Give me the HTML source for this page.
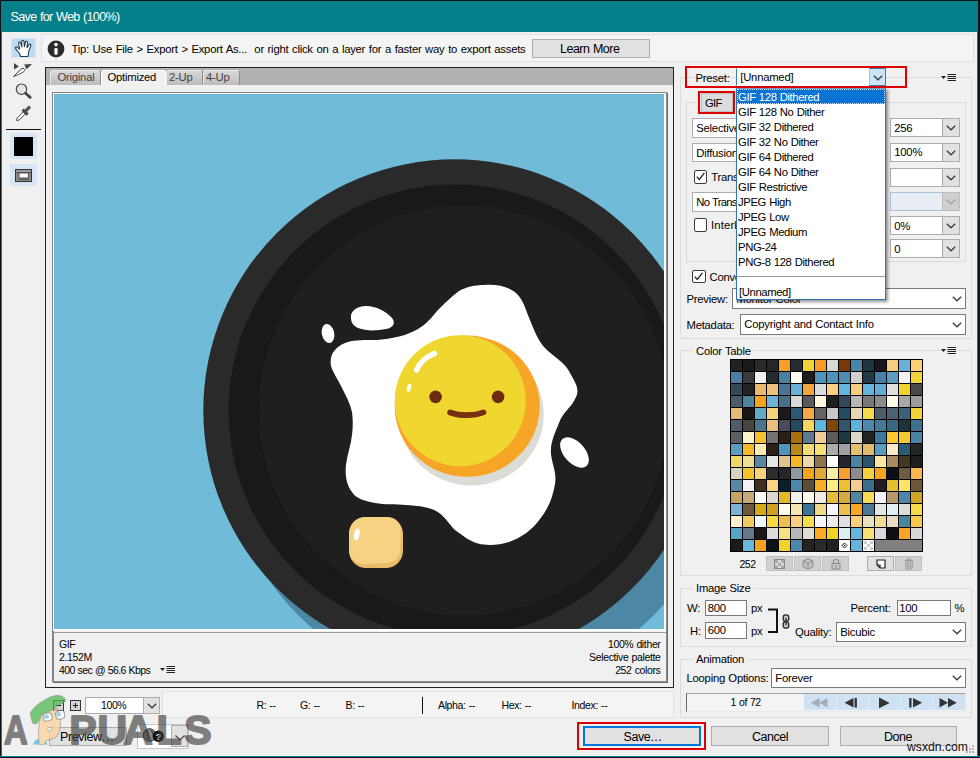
<!DOCTYPE html>
<html lang="en"><head><meta charset="utf-8"><title>Save for Web (100%)</title>
<style>
*{box-sizing:border-box;margin:0;padding:0}
html,body{width:980px;height:758px;overflow:hidden;background:#f0f0f0}
body{font-family:"Liberation Sans",sans-serif;font-size:11.3px;letter-spacing:-0.25px;word-spacing:0.5px;color:#000;position:relative}
#win{position:absolute;left:0;top:0;width:980px;height:758px;background:#f0f0f0;overflow:hidden}
.a{position:absolute}
.t{position:absolute;white-space:nowrap;line-height:14px;height:14px}
.dd{position:absolute;background:#fff;border:1px solid #adadad}
.dd .b{position:absolute;right:-1px;top:-1px;bottom:-1px;width:18px;background:#e1e1e1;border:1px solid #adadad}
.dd .b svg{position:absolute;left:3.3px;top:50%;margin-top:-2.3px}
.dd .v{position:absolute;left:3.3px;top:50%;margin-top:-7px;line-height:14px;white-space:nowrap}
.inp{position:absolute;background:#fff;border:1px solid #7a7a7a}
.inp .v{position:absolute;left:1.7px;top:50%;margin-top:-7px;line-height:14px}
.btn{position:absolute;background:#e1e1e1;border:1px solid #adadad;text-align:center}
.grp{position:absolute;border:1px solid #dcdcdc}
.grp>.lg{position:absolute;top:-7.3px;background:#f0f0f0;padding:0 3px;line-height:14px;white-space:nowrap}
.cb{position:absolute;width:13.5px;height:13.5px;background:#fff;border:1px solid #3c3c3c;border-radius:2px}
.li{position:absolute;left:0;right:0;height:15px;line-height:15px;padding-left:1px;padding-top:0.5px;white-space:nowrap;letter-spacing:-0.4px}
</style></head>
<body>
<div id="win">
<div class="a" style="left:0;top:0;width:980px;height:32px;background:#05808a"></div>
<span class="t" style="left:10.5px;top:10px;font-size:12.6px;color:#fff;letter-spacing:-0.66px;">Save for Web (100%)</span>
<div class="a" style="left:11px;top:38px;width:25px;height:20px;background:#bcdcf4;border:1px solid #d2e8f8"></div>
<svg class="a" style="left:14px;top:39px" width="20" height="19" viewBox="0 0 20 19">
<path d="M6.5 17.5 L5.5 14.5 L1.6 9.6 C0.9 8.6 2 7.4 3.2 8.2 L5.6 10.2 L4.6 4.2 C4.4 2.8 6.3 2.5 6.7 3.8 L7.9 8 L7.7 2.4 C7.7 0.9 9.9 0.9 10 2.4 L10.4 7.8 L11.4 3 C11.7 1.7 13.6 2 13.5 3.4 L13 8.6 L14.9 5.6 C15.6 4.5 17.2 5.3 16.8 6.6 L14.6 13 L14 17.5 Z" fill="#fff" stroke="#24384a" stroke-width="1.05" stroke-linejoin="round"/>
</svg>
<svg class="a" style="left:12px;top:61px" width="24" height="18" viewBox="0 0 24 18">
<path d="M2 2 L2 8.6 L6.8 5.6 Z" fill="#444"/>
<path d="M12.2 3.4 L20 3 L14.6 8.2 Z" fill="#444"/>
<path d="M1.5 15.5 L9 8.2 C10 7 12.4 7 12.8 8.6 C12.8 11 9 12.6 1.5 15.5 Z" fill="#f8f8f8" stroke="#444" stroke-width="1"/>
</svg>
<svg class="a" style="left:12px;top:81px" width="24" height="20" viewBox="0 0 24 20">
<circle cx="9.5" cy="8.2" r="5.2" fill="#e4e4e4" stroke="#444" stroke-width="1.2"/>
<path d="M13.6 12.2 L18.2 16.4" stroke="#444" stroke-width="2.8" stroke-linecap="round"/>
</svg>
<svg class="a" style="left:12px;top:103px" width="24" height="20" viewBox="0 0 24 20">
<path d="M4.6 17.4 L5 15.2 L12 8.2 L14 10.2 L7 17.2 Z" fill="#fff" stroke="#444" stroke-width="1"/>
<path d="M10.6 6.6 L15.6 11.6" stroke="#444" stroke-width="3"/>
<path d="M14 7.6 L17 4.6" stroke="#555" stroke-width="3.4" stroke-linecap="round"/>
</svg>
<div class="a" style="left:6px;top:129px;width:35px;height:1.4px;background:#111"></div>
<div class="a" style="left:10px;top:133px;width:27px;height:26px;background:#d6e6f4"></div>
<div class="a" style="left:14px;top:137px;width:19px;height:19px;background:#000"></div>
<div class="a" style="left:10px;top:164px;width:27px;height:22px;background:#d6e6f4"></div>
<svg class="a" style="left:15px;top:169px" width="17" height="13" viewBox="0 0 17 13">
<rect x="0.5" y="0.5" width="16" height="12" fill="#8a8a8a" stroke="#333" stroke-width="1"/>
<rect x="1" y="1" width="15" height="2.4" fill="#9c9c9c"/>
<rect x="1" y="3.4" width="15" height="0.8" fill="#444"/>
<rect x="4" y="4" width="9.5" height="5" fill="#fff" stroke="#333" stroke-width="0.8"/>
<rect x="4" y="10" width="9.5" height="0.8" fill="#444"/>
</svg>
<div class="a" style="left:41px;top:34px;width:933px;height:28px;background:#f4f4f4;border:1px solid #e2e2e2"></div>
<svg class="a" style="left:46.5px;top:39.5px" width="18" height="18" viewBox="0 0 18 18">
<circle cx="9" cy="9" r="8.400" fill="#2b2b2b"/>
<circle cx="9" cy="4.600" r="1.800" fill="#fff"/>
<rect x="7.400" y="8.200" width="3.200" height="6.400" fill="#fff"/>
</svg>
<span class="t" style="left:71.5px;top:41.5px;word-spacing:0.8px;">Tip: Use File &gt; Export &gt; Export As...&nbsp; or right click on a layer for a faster way to export assets</span>
<div class="btn" style="left:532px;top:38.5px;width:118px;height:19.5px;background:#e1e1e1;border-color:#adadad"></div>
<span class="t" style="left:560px;top:41.5px;font-size:12.5px;letter-spacing:-0.5px;">Learn More</span>
<div class="a" style="left:45px;top:67px;width:629px;height:621px;border:1px solid #222;background:#f0f0f0"></div>
<div class="a" style="left:46px;top:68px;width:627px;height:17px;background:#b1b1b1"></div>
<div class="a" style="left:50px;top:69.5px;width:51px;height:15.5px;background:linear-gradient(#d8d8d8,#bcbcbc);border:1px solid #e8e8e8;border-bottom:none;border-right-color:#8c8c8c;border-radius:3px 3px 0 0"></div>
<div class="a" style="left:101px;top:69.5px;width:65px;height:16.5px;background:#f0f0f0;border:1px solid #fff;border-bottom:none;border-radius:3px 3px 0 0"></div>
<div class="a" style="left:166px;top:69.5px;width:37px;height:15.5px;background:linear-gradient(#d8d8d8,#bcbcbc);border:1px solid #e8e8e8;border-bottom:none;border-right-color:#8c8c8c;border-radius:3px 3px 0 0"></div>
<div class="a" style="left:203px;top:69.5px;width:37px;height:15.5px;background:linear-gradient(#d8d8d8,#bcbcbc);border:1px solid #e8e8e8;border-bottom:none;border-right-color:#8c8c8c;border-radius:3px 3px 0 0"></div>
<span class="t" style="left:57.5px;top:69.7px;color:#444;">Original</span>
<span class="t" style="left:107.5px;top:69.7px;color:#000;">Optimized</span>
<span class="t" style="left:169px;top:69.7px;color:#444;">2-Up</span>
<span class="t" style="left:206px;top:69.7px;color:#444;">4-Up</span>
<div class="a" style="left:51.5px;top:91.5px;width:615.5px;height:590.5px;border:1px solid #8c8c8c;border-left:2px solid #848484;border-top:2px solid #848484;background:#f0f0f0;box-shadow:1px 1px 0 #6a6a6a"></div>
<div class="a" style="left:53px;top:93px;width:613px;height:538px;background:#fff"></div>
<div class="a" style="left:53px;top:631.7px;width:613px;height:1px;background:#9a9a9a"></div>
<svg class="a" style="left:54px;top:94px" width="610" height="535" viewBox="54 94 610 535">
<rect x="54" y="94" width="610" height="535" fill="#70bbd7"/>
<circle cx="476" cy="437.6" r="251.3" fill="#4c87a6"/>
<circle cx="454.6" cy="410.6" r="251.3" fill="#2a2a2a"/>
<circle cx="454.6" cy="410.6" r="226" fill="#181a1a"/>
<circle cx="464" cy="410.4" r="205" fill="#1f1f1f"/>
<!-- egg white -->
<path d="M484 285 C498 284 510 287 517 294 C524 301 526 311 530 320 C534 330 538 340 544 347 C552 356 565 362 570 373 C575 382 580 389 576 397 C572 407 562 413 559 423 C555 433 550 443 551 454 C552 464 557 473 555 484 C553 497 548 509 540 519 C532 530 521 538 509 542 C499 545 488 546 478 543.5 C469 541 462 535 455 530 C449 524 444 515 436 511 C427 506 416 506 406 505 C396 504 385 505 375 503 C366 501 356 499 352 492 C346 484 345 474 346 465 C347 455 351 445 352 435 C353 427 353 419 352 412 C350 403 346 396 342.5 389 C339 381 333 373 331 366 C330 360 331 354 335 350 C339 345 346 342 352 341 C363 339 375 341 386 339 C399 337 411 334 421 327 C429 322 434 314 440 308 C446 302 452 296 459 291 C466 287 475 285 484 285 Z" fill="#fff"/>
<path d="M351 318 C350 311 357 306 366 306 C376 306 386 311 392 318 C396 323 393 328 386 329 C376 331 366 331 358 328 C354 326 351 323 351 318 Z" fill="#fff"/>
<ellipse cx="328" cy="333.5" rx="6.2" ry="9.6" fill="#fff" transform="rotate(-12 328 333.5)"/>
<ellipse cx="574.5" cy="452.5" rx="18" ry="10.5" fill="#fff" transform="rotate(48 574.5 452.5)"/>
<!-- yolk -->
<ellipse cx="471.2" cy="414.500" rx="72.500" ry="71" fill="#dadcd5"/>
<ellipse cx="467.2" cy="406.200" rx="72.500" ry="70.600" fill="#f6a526"/>
<circle cx="460.3" cy="400.8" r="65.5" fill="#efd730"/>
<path d="M416.5 370 C420 362.500 426.500 356.500 434.500 353.500" fill="none" stroke="#fff" stroke-width="5.4" stroke-linecap="round"/>
<ellipse cx="409" cy="387.700" rx="2" ry="4.200" fill="#fff" transform="rotate(15 409 387.700)"/>
<circle cx="435.6" cy="396.900" r="6.300" fill="#6e2c10"/>
<circle cx="498.1" cy="396.900" r="6.300" fill="#6e2c10"/>
<path d="M450.100 412.400 C460 416 474 416 483.400 412.400" fill="none" stroke="#7a3010" stroke-width="5.800" stroke-linecap="round"/>
<!-- butter -->
<rect x="349" y="517" width="54" height="51" rx="17" ry="17" fill="#e9bc68"/>
<path d="M349 534 C349 524 356 517 366 517 L386 517 C396 517 401 523 401 532 L400 549 C400 558 394 563 385 563 L366 564 C356 564 349 558 349 549 Z" fill="#f8d283"/>
<ellipse cx="356.8" cy="534.5" rx="2.8" ry="6" fill="#fff" transform="rotate(10 356.8 534.5)"/>
</svg>
<span class="t" style="left:59px;top:637px;font-size:10.5px;letter-spacing:-0.36px;">GIF</span>
<span class="t" style="left:59px;top:650px;font-size:10.5px;letter-spacing:-0.36px;">2.152M</span>
<span class="t" style="left:59px;top:663px;font-size:10.5px;letter-spacing:-0.6px;">400 sec @ 56.6 Kbps</span>
<svg class="a" style="left:160px;top:665px" width="16" height="10" viewBox="0 0 16 10"><path d="M0 3 L5 3 L2.5 6 Z" fill="#222"/><path d="M6.5 1.5 H15 M6.5 3.5 H15 M6.5 5.5 H15 M6.5 7.5 H15" stroke="#222" stroke-width="1"/></svg>
<span class="t" style="right:319.5px;top:637px;letter-spacing:-0.36px;font-size:10.5px;">100% dither</span>
<span class="t" style="right:319.5px;top:650px;letter-spacing:-0.36px;font-size:10.5px;">Selective palette</span>
<span class="t" style="right:319.5px;top:663px;letter-spacing:-0.36px;font-size:10.5px;">252 colors</span>
<div class="grp" style="left:680px;top:77px;width:292px;height:262px"></div>
<div class="grp" style="left:686px;top:102px;width:280px;height:160px"></div>
<span class="t" style="left:695.5px;top:71px;">Preset:</span>
<svg class="a" style="left:941px;top:73px" width="16" height="10" viewBox="0 0 16 10"><path d="M0 3 L5 3 L2.5 6 Z" fill="#222"/><path d="M6.5 1.5 H15 M6.5 3.5 H15 M6.5 5.5 H15 M6.5 7.5 H15" stroke="#222" stroke-width="1"/></svg>
<div class="dd" style="left:736px;top:68px;width:150px;height:18px;border-color:#3c7cb8;border-top-color:#fff;border-bottom-color:#fff;padding-top:1px;"><span class="v">[Unnamed]</span><span class="b" style="width:17px;background:#cce4f7;border-color:#3c7cb8;border-left-color:#9cc4e4;"><svg width="10" height="6" viewBox="0 0 10 6"><path d="M0.8 0.7 L5 4.8 L9.2 0.7" fill="none" stroke="#3a3a3a" stroke-width="1.25"/></svg></span></div>
<div class="a" style="left:685px;top:66px;width:222px;height:22px;border:2px solid #dc0000"></div>
<div class="btn" style="left:701px;top:93px;width:32px;height:19px;background:#dcdcdc;border-color:#bdbdbd"></div>
<span class="t" style="left:705px;top:96px;letter-spacing:-0.7px;">GIF</span>
<div class="a" style="left:698px;top:91px;width:37px;height:23px;border:2px solid #dc0000"></div>
<div class="dd" style="left:692px;top:118px;width:130px;height:19.5px;"><span class="v">Selective</span><span class="b" style="width:18px;"><svg width="10" height="6" viewBox="0 0 10 6"><path d="M0.8 0.7 L5 4.8 L9.2 0.7" fill="none" stroke="#3a3a3a" stroke-width="1.25"/></svg></span></div>
<div class="dd" style="left:692px;top:142.8px;width:130px;height:19.7px;"><span class="v">Diffusion</span><span class="b" style="width:18px;"><svg width="10" height="6" viewBox="0 0 10 6"><path d="M0.8 0.7 L5 4.8 L9.2 0.7" fill="none" stroke="#3a3a3a" stroke-width="1.25"/></svg></span></div>
<div class="dd" style="left:692px;top:192px;width:150px;height:19.7px;"><span class="v"><span style="letter-spacing:-0.75px">No Transparency Dither</span></span><span class="b" style="width:18px;"><svg width="10" height="6" viewBox="0 0 10 6"><path d="M0.8 0.7 L5 4.8 L9.2 0.7" fill="none" stroke="#3a3a3a" stroke-width="1.25"/></svg></span></div>
<div class="cb" style="left:693.5px;top:170.3px"><svg class="a" style="left:0;top:0" width="11" height="11" viewBox="0 0 11 11"><path d="M1.8 5.6 L4.3 8.4 L9.4 1.8" fill="none" stroke="#222" stroke-width="1.3"/></svg></div>
<span class="t" style="left:711.3px;top:170.3px;">Transparency</span>
<div class="cb" style="left:693.5px;top:218.3px"></div>
<span class="t" style="left:711px;top:218.3px;letter-spacing:0.15px;">Interlaced</span>
<div class="cb" style="left:692px;top:269.5px"><svg class="a" style="left:0;top:0" width="11" height="11" viewBox="0 0 11 11"><path d="M1.8 5.6 L4.3 8.4 L9.4 1.8" fill="none" stroke="#222" stroke-width="1.3"/></svg></div>
<span class="t" style="left:709.5px;top:269.5px;">Convert to sRGB</span>
<div class="dd" style="left:890px;top:118px;width:70px;height:19.3px;"><span class="v">256</span><span class="b" style="width:18px;"><svg width="10" height="6" viewBox="0 0 10 6"><path d="M0.8 0.7 L5 4.8 L9.2 0.7" fill="none" stroke="#3a3a3a" stroke-width="1.25"/></svg></span></div>
<div class="dd" style="left:890px;top:142.8px;width:70px;height:19.4px;"><span class="v">100%</span><span class="b" style="width:18px;"><svg width="10" height="6" viewBox="0 0 10 6"><path d="M0.8 0.7 L5 4.8 L9.2 0.7" fill="none" stroke="#3a3a3a" stroke-width="1.25"/></svg></span></div>
<div class="dd" style="left:890px;top:167.5px;width:70px;height:19.5px;"><span class="v"></span><span class="b" style="width:18px;"><svg width="10" height="6" viewBox="0 0 10 6"><path d="M0.8 0.7 L5 4.8 L9.2 0.7" fill="none" stroke="#3a3a3a" stroke-width="1.25"/></svg></span></div>
<div class="dd" style="left:890px;top:192px;width:70px;height:19px;background:#e9eef4;border-color:#a9c2dc;"><span class="v"></span><span class="b" style="width:18px;background:#cfcfcf;border-color:#bcbcbc;"><svg width="10" height="6" viewBox="0 0 10 6"><path d="M0.5 0.5 L5 5 L9.5 0.5" fill="none" stroke="#a0a0a0" stroke-width="1.1"/></svg></span></div>
<div class="dd" style="left:890px;top:216px;width:70px;height:19px;"><span class="v">0%</span><span class="b" style="width:18px;"><svg width="10" height="6" viewBox="0 0 10 6"><path d="M0.8 0.7 L5 4.8 L9.2 0.7" fill="none" stroke="#3a3a3a" stroke-width="1.25"/></svg></span></div>
<div class="dd" style="left:890px;top:239px;width:70px;height:19px;"><span class="v">0</span><span class="b" style="width:18px;"><svg width="10" height="6" viewBox="0 0 10 6"><path d="M0.8 0.7 L5 4.8 L9.2 0.7" fill="none" stroke="#3a3a3a" stroke-width="1.25"/></svg></span></div>
<span class="t" style="left:686.5px;top:292px;">Preview:</span>
<div class="dd" style="left:732px;top:288px;width:234px;height:21px;border-color:#7a7a7a;"><span class="v">Monitor Color</span><span class="b" style="width:18px;background:transparent;border-color:transparent;"><svg width="10" height="6" viewBox="0 0 10 6"><path d="M0.8 0.7 L5 4.8 L9.2 0.7" fill="none" stroke="#3a3a3a" stroke-width="1.25"/></svg></span></div>
<span class="t" style="left:686.5px;top:317.5px;">Metadata:</span>
<div class="dd" style="left:740px;top:314px;width:226px;height:20.5px;border-color:#7a7a7a;"><span class="v">Copyright and Contact Info</span><span class="b" style="width:18px;background:transparent;border-color:transparent;"><svg width="10" height="6" viewBox="0 0 10 6"><path d="M0.8 0.7 L5 4.8 L9.2 0.7" fill="none" stroke="#3a3a3a" stroke-width="1.25"/></svg></span></div>
<div class="a" style="left:736px;top:88px;width:150px;height:212px;background:#fff;border:1px solid #2f74b5;border-top-color:#6aa0d0;box-shadow:2px 2px 3px rgba(0,0,0,.42)"><div class="li" style="top:0px;background:#0a74d4;color:#fff;outline:1px dotted #cfe4f8;outline-offset:-1px">GIF 128 Dithered</div><div class="li" style="top:15px">GIF 128 No Dither</div><div class="li" style="top:30px">GIF 32 Dithered</div><div class="li" style="top:45px">GIF 32 No Dither</div><div class="li" style="top:60px">GIF 64 Dithered</div><div class="li" style="top:75px">GIF 64 No Dither</div><div class="li" style="top:90px">GIF Restrictive</div><div class="li" style="top:105px">JPEG High</div><div class="li" style="top:120px">JPEG Low</div><div class="li" style="top:135px">JPEG Medium</div><div class="li" style="top:150px">PNG-24</div><div class="li" style="top:165px">PNG-8 128 Dithered</div><div class="a" style="left:0;right:0;top:186.5px;height:1px;background:#9a9a9a"></div><div class="li" style="top:195px;padding-left:2px">[Unnamed]</div></div>
<div class="grp" style="left:680px;top:350px;width:292px;height:226px"><span class="lg" style="left:12px">Color Table</span></div>
<svg class="a" style="left:941px;top:346px" width="16" height="10" viewBox="0 0 16 10"><path d="M0 3 L5 3 L2.5 6 Z" fill="#222"/><path d="M6.5 1.5 H15 M6.5 3.5 H15 M6.5 5.5 H15 M6.5 7.5 H15" stroke="#222" stroke-width="1"/></svg>
<svg class="a" style="left:730px;top:359px" width="193" height="193" viewBox="0 0 193 193" shape-rendering="crispEdges"><rect width="193" height="193" fill="#000"/><rect x="1" y="1" width="11" height="11" fill="#222222"/><rect x="13" y="1" width="11" height="11" fill="#1a1a1a"/><rect x="25" y="1" width="11" height="11" fill="#2a2a2a"/><rect x="37" y="1" width="11" height="11" fill="#262626"/><rect x="49" y="1" width="11" height="11" fill="#f6a02c"/><rect x="61" y="1" width="11" height="11" fill="#262c32"/><rect x="73" y="1" width="11" height="11" fill="#f2d43a"/><rect x="85" y="1" width="11" height="11" fill="#f89c28"/><rect x="97" y="1" width="11" height="11" fill="#d8d8d4"/><rect x="109" y="1" width="11" height="11" fill="#78380c"/><rect x="121" y="1" width="11" height="11" fill="#4a86a8"/><rect x="133" y="1" width="11" height="11" fill="#1e3640"/><rect x="145" y="1" width="11" height="11" fill="#18161c"/><rect x="157" y="1" width="11" height="11" fill="#f6cc80"/><rect x="169" y="1" width="11" height="11" fill="#6ab0d4"/><rect x="181" y="1" width="11" height="11" fill="#fcd078"/><rect x="1" y="13" width="11" height="11" fill="#4a7ea6"/><rect x="13" y="13" width="11" height="11" fill="#3a3a3a"/><rect x="25" y="13" width="11" height="11" fill="#f0f0f0"/><rect x="37" y="13" width="11" height="11" fill="#222c2c"/><rect x="49" y="13" width="11" height="11" fill="#4a80a0"/><rect x="61" y="13" width="11" height="11" fill="#fffcf0"/><rect x="73" y="13" width="11" height="11" fill="#1c1c1c"/><rect x="85" y="13" width="11" height="11" fill="#4e94b8"/><rect x="97" y="13" width="11" height="11" fill="#4e94b8"/><rect x="109" y="13" width="11" height="11" fill="#4e8cb0"/><rect x="121" y="13" width="11" height="11" fill="#d0d0d0"/><rect x="133" y="13" width="11" height="11" fill="#223a48"/><rect x="145" y="13" width="11" height="11" fill="#4680a8"/><rect x="157" y="13" width="11" height="11" fill="#5a9cc4"/><rect x="169" y="13" width="11" height="11" fill="#f4f0f4"/><rect x="181" y="13" width="11" height="11" fill="#f2d438"/><rect x="1" y="25" width="11" height="11" fill="#364856"/><rect x="13" y="25" width="11" height="11" fill="#222222"/><rect x="25" y="25" width="11" height="11" fill="#ecb86c"/><rect x="37" y="25" width="11" height="11" fill="#ecc27c"/><rect x="49" y="25" width="11" height="11" fill="#4c7496"/><rect x="61" y="25" width="11" height="11" fill="#68b0d4"/><rect x="73" y="25" width="11" height="11" fill="#f4a43c"/><rect x="85" y="25" width="11" height="11" fill="#dcdcdc"/><rect x="97" y="25" width="11" height="11" fill="#fcd080"/><rect x="109" y="25" width="11" height="11" fill="#64b4dc"/><rect x="121" y="25" width="11" height="11" fill="#f8cc80"/><rect x="133" y="25" width="11" height="11" fill="#64b4dc"/><rect x="145" y="25" width="11" height="11" fill="#62acd4"/><rect x="157" y="25" width="11" height="11" fill="#e0e0e0"/><rect x="169" y="25" width="11" height="11" fill="#f0d42c"/><rect x="181" y="25" width="11" height="11" fill="#484848"/><rect x="1" y="37" width="11" height="11" fill="#485c70"/><rect x="13" y="37" width="11" height="11" fill="#4e84a0"/><rect x="25" y="37" width="11" height="11" fill="#f4a420"/><rect x="37" y="37" width="11" height="11" fill="#6cb4d8"/><rect x="49" y="37" width="11" height="11" fill="#4a7088"/><rect x="61" y="37" width="11" height="11" fill="#d8d8d8"/><rect x="73" y="37" width="11" height="11" fill="#5a5a5a"/><rect x="85" y="37" width="11" height="11" fill="#fff8e0"/><rect x="97" y="37" width="11" height="11" fill="#1e1e1e"/><rect x="109" y="37" width="11" height="11" fill="#34485c"/><rect x="121" y="37" width="11" height="11" fill="#b8b8b8"/><rect x="133" y="37" width="11" height="11" fill="#787878"/><rect x="145" y="37" width="11" height="11" fill="#8c8c8c"/><rect x="157" y="37" width="11" height="11" fill="#fffce8"/><rect x="169" y="37" width="11" height="11" fill="#a8a8a8"/><rect x="181" y="37" width="11" height="11" fill="#9c9c9c"/><rect x="1" y="49" width="11" height="11" fill="#e4bc78"/><rect x="13" y="49" width="11" height="11" fill="#181414"/><rect x="25" y="49" width="11" height="11" fill="#62a8c8"/><rect x="37" y="49" width="11" height="11" fill="#f6d27c"/><rect x="49" y="49" width="11" height="11" fill="#1a181c"/><rect x="61" y="49" width="11" height="11" fill="#2c5a74"/><rect x="73" y="49" width="11" height="11" fill="#f4a848"/><rect x="85" y="49" width="11" height="11" fill="#646464"/><rect x="97" y="49" width="11" height="11" fill="#c8c8c8"/><rect x="109" y="49" width="11" height="11" fill="#244c60"/><rect x="121" y="49" width="11" height="11" fill="#e4d8b4"/><rect x="133" y="49" width="11" height="11" fill="#f4dc50"/><rect x="145" y="49" width="11" height="11" fill="#505c68"/><rect x="157" y="49" width="11" height="11" fill="#486470"/><rect x="169" y="49" width="11" height="11" fill="#3c6078"/><rect x="181" y="49" width="11" height="11" fill="#f2d438"/><rect x="1" y="61" width="11" height="11" fill="#505c6c"/><rect x="13" y="61" width="11" height="11" fill="#46443c"/><rect x="25" y="61" width="11" height="11" fill="#4c748c"/><rect x="37" y="61" width="11" height="11" fill="#ecc07c"/><rect x="49" y="61" width="11" height="11" fill="#484c5c"/><rect x="61" y="61" width="11" height="11" fill="#244a60"/><rect x="73" y="61" width="11" height="11" fill="#f4d85c"/><rect x="85" y="61" width="11" height="11" fill="#5cb8dc"/><rect x="97" y="61" width="11" height="11" fill="#7c4808"/><rect x="109" y="61" width="11" height="11" fill="#34566c"/><rect x="121" y="61" width="11" height="11" fill="#5cb4dc"/><rect x="133" y="61" width="11" height="11" fill="#4e88a8"/><rect x="145" y="61" width="11" height="11" fill="#46789c"/><rect x="157" y="61" width="11" height="11" fill="#3a6880"/><rect x="169" y="61" width="11" height="11" fill="#1c343c"/><rect x="181" y="61" width="11" height="11" fill="#3e7090"/><rect x="1" y="73" width="11" height="11" fill="#5c6060"/><rect x="13" y="73" width="11" height="11" fill="#fcf4c8"/><rect x="25" y="73" width="11" height="11" fill="#f4c430"/><rect x="37" y="73" width="11" height="11" fill="#747474"/><rect x="49" y="73" width="11" height="11" fill="#2a2018"/><rect x="61" y="73" width="11" height="11" fill="#a8700c"/><rect x="73" y="73" width="11" height="11" fill="#5e7890"/><rect x="85" y="73" width="11" height="11" fill="#f0cc9c"/><rect x="97" y="73" width="11" height="11" fill="#5c5c5c"/><rect x="109" y="73" width="11" height="11" fill="#1e3840"/><rect x="121" y="73" width="11" height="11" fill="#dcd8c8"/><rect x="133" y="73" width="11" height="11" fill="#222222"/><rect x="145" y="73" width="11" height="11" fill="#3e789c"/><rect x="157" y="73" width="11" height="11" fill="#fcc830"/><rect x="169" y="73" width="11" height="11" fill="#f4c830"/><rect x="181" y="73" width="11" height="11" fill="#4a84a4"/><rect x="1" y="85" width="11" height="11" fill="#5c9cc0"/><rect x="13" y="85" width="11" height="11" fill="#f4b828"/><rect x="25" y="85" width="11" height="11" fill="#fcecb4"/><rect x="37" y="85" width="11" height="11" fill="#2a2018"/><rect x="49" y="85" width="11" height="11" fill="#4e94bc"/><rect x="61" y="85" width="11" height="11" fill="#b88818"/><rect x="73" y="85" width="11" height="11" fill="#f4dc74"/><rect x="85" y="85" width="11" height="11" fill="#f6e078"/><rect x="97" y="85" width="11" height="11" fill="#acacac"/><rect x="109" y="85" width="11" height="11" fill="#a0a0a0"/><rect x="121" y="85" width="11" height="11" fill="#e4c070"/><rect x="133" y="85" width="11" height="11" fill="#e0bc70"/><rect x="145" y="85" width="11" height="11" fill="#5c9cbc"/><rect x="157" y="85" width="11" height="11" fill="#f8ecc8"/><rect x="169" y="85" width="11" height="11" fill="#2c5c74"/><rect x="181" y="85" width="11" height="11" fill="#222828"/><rect x="1" y="97" width="11" height="11" fill="#f0d868"/><rect x="13" y="97" width="11" height="11" fill="#f0e094"/><rect x="25" y="97" width="11" height="11" fill="#5888a4"/><rect x="37" y="97" width="11" height="11" fill="#e4e8e0"/><rect x="49" y="97" width="11" height="11" fill="#e0c48c"/><rect x="61" y="97" width="11" height="11" fill="#f4b828"/><rect x="73" y="97" width="11" height="11" fill="#ecd8a8"/><rect x="85" y="97" width="11" height="11" fill="#8c744c"/><rect x="97" y="97" width="11" height="11" fill="#ffffff"/><rect x="109" y="97" width="11" height="11" fill="#24242c"/><rect x="121" y="97" width="11" height="11" fill="#4c84a4"/><rect x="133" y="97" width="11" height="11" fill="#2c5468"/><rect x="145" y="97" width="11" height="11" fill="#fce8a0"/><rect x="157" y="97" width="11" height="11" fill="#a88c60"/><rect x="169" y="97" width="11" height="11" fill="#443824"/><rect x="181" y="97" width="11" height="11" fill="#1e1e1e"/><rect x="1" y="109" width="11" height="11" fill="#d8d4c0"/><rect x="13" y="109" width="11" height="11" fill="#f4c42c"/><rect x="25" y="109" width="11" height="11" fill="#f8d080"/><rect x="37" y="109" width="11" height="11" fill="#2c2c2c"/><rect x="49" y="109" width="11" height="11" fill="#28242c"/><rect x="61" y="109" width="11" height="11" fill="#9098a0"/><rect x="73" y="109" width="11" height="11" fill="#f4a420"/><rect x="85" y="109" width="11" height="11" fill="#e0a838"/><rect x="97" y="109" width="11" height="11" fill="#fcf0a0"/><rect x="109" y="109" width="11" height="11" fill="#f4a030"/><rect x="121" y="109" width="11" height="11" fill="#8c8c8c"/><rect x="133" y="109" width="11" height="11" fill="#f4d040"/><rect x="145" y="109" width="11" height="11" fill="#f8a420"/><rect x="157" y="109" width="11" height="11" fill="#0c1014"/><rect x="169" y="109" width="11" height="11" fill="#6c5c40"/><rect x="181" y="109" width="11" height="11" fill="#fcb850"/><rect x="1" y="121" width="11" height="11" fill="#5886a4"/><rect x="13" y="121" width="11" height="11" fill="#f4f0f8"/><rect x="25" y="121" width="11" height="11" fill="#3c3020"/><rect x="37" y="121" width="11" height="11" fill="#fcd488"/><rect x="49" y="121" width="11" height="11" fill="#0c202c"/><rect x="61" y="121" width="11" height="11" fill="#4c88ac"/><rect x="73" y="121" width="11" height="11" fill="#5c4c38"/><rect x="85" y="121" width="11" height="11" fill="#f8b02c"/><rect x="97" y="121" width="11" height="11" fill="#fcec84"/><rect x="109" y="121" width="11" height="11" fill="#ecc030"/><rect x="121" y="121" width="11" height="11" fill="#f4cc94"/><rect x="133" y="121" width="11" height="11" fill="#3c7088"/><rect x="145" y="121" width="11" height="11" fill="#241c24"/><rect x="157" y="121" width="11" height="11" fill="#e4c030"/><rect x="169" y="121" width="11" height="11" fill="#fce468"/><rect x="181" y="121" width="11" height="11" fill="#6c5838"/><rect x="1" y="133" width="11" height="11" fill="#c8a464"/><rect x="13" y="133" width="11" height="11" fill="#c8a878"/><rect x="25" y="133" width="11" height="11" fill="#fffcf8"/><rect x="37" y="133" width="11" height="11" fill="#dcd8d0"/><rect x="49" y="133" width="11" height="11" fill="#e4b828"/><rect x="61" y="133" width="11" height="11" fill="#f0f0ec"/><rect x="73" y="133" width="11" height="11" fill="#fcf8e8"/><rect x="85" y="133" width="11" height="11" fill="#f0ece4"/><rect x="97" y="133" width="11" height="11" fill="#e8bc38"/><rect x="109" y="133" width="11" height="11" fill="#d8a840"/><rect x="121" y="133" width="11" height="11" fill="#5484a0"/><rect x="133" y="133" width="11" height="11" fill="#f8dc58"/><rect x="145" y="133" width="11" height="11" fill="#f4f4f8"/><rect x="157" y="133" width="11" height="11" fill="#b89868"/><rect x="169" y="133" width="11" height="11" fill="#4c84ac"/><rect x="181" y="133" width="11" height="11" fill="#d0a424"/><rect x="1" y="145" width="11" height="11" fill="#7cb4d8"/><rect x="13" y="145" width="11" height="11" fill="#6c583c"/><rect x="25" y="145" width="11" height="11" fill="#d8a81c"/><rect x="37" y="145" width="11" height="11" fill="#d0a024"/><rect x="49" y="145" width="11" height="11" fill="#fffcf0"/><rect x="61" y="145" width="11" height="11" fill="#f8e4b0"/><rect x="73" y="145" width="11" height="11" fill="#3c7494"/><rect x="85" y="145" width="11" height="11" fill="#f0d88c"/><rect x="97" y="145" width="11" height="11" fill="#f4f8fc"/><rect x="109" y="145" width="11" height="11" fill="#ecc050"/><rect x="121" y="145" width="11" height="11" fill="#f4a824"/><rect x="133" y="145" width="11" height="11" fill="#4c7898"/><rect x="145" y="145" width="11" height="11" fill="#e4e8e4"/><rect x="157" y="145" width="11" height="11" fill="#e0f0f4"/><rect x="169" y="145" width="11" height="11" fill="#e0dcd8"/><rect x="181" y="145" width="11" height="11" fill="#f4dc48"/><rect x="1" y="157" width="11" height="11" fill="#fcf0d0"/><rect x="13" y="157" width="11" height="11" fill="#f0cc60"/><rect x="25" y="157" width="11" height="11" fill="#f0f8fc"/><rect x="37" y="157" width="11" height="11" fill="#f8d840"/><rect x="49" y="157" width="11" height="11" fill="#ecc050"/><rect x="61" y="157" width="11" height="11" fill="#fcd080"/><rect x="73" y="157" width="11" height="11" fill="#f8dc50"/><rect x="85" y="157" width="11" height="11" fill="#f4f8fc"/><rect x="97" y="157" width="11" height="11" fill="#ececec"/><rect x="109" y="157" width="11" height="11" fill="#e0e0e4"/><rect x="121" y="157" width="11" height="11" fill="#fcd078"/><rect x="133" y="157" width="11" height="11" fill="#e8e0c0"/><rect x="145" y="157" width="11" height="11" fill="#f0dc94"/><rect x="157" y="157" width="11" height="11" fill="#e8dcc8"/><rect x="169" y="157" width="11" height="11" fill="#4c849c"/><rect x="181" y="157" width="11" height="11" fill="#f8c84c"/><rect x="1" y="169" width="11" height="11" fill="#58a4c8"/><rect x="13" y="169" width="11" height="11" fill="#687888"/><rect x="25" y="169" width="11" height="11" fill="#1c1818"/><rect x="37" y="169" width="11" height="11" fill="#dcdcd8"/><rect x="49" y="169" width="11" height="11" fill="#f8e084"/><rect x="61" y="169" width="11" height="11" fill="#b8b8b8"/><rect x="73" y="169" width="11" height="11" fill="#e0dcd4"/><rect x="85" y="169" width="11" height="11" fill="#fca828"/><rect x="97" y="169" width="11" height="11" fill="#f0d42c"/><rect x="109" y="169" width="11" height="11" fill="#e0f0f0"/><rect x="121" y="169" width="11" height="11" fill="#68b4dc"/><rect x="133" y="169" width="11" height="11" fill="#f8e078"/><rect x="145" y="169" width="11" height="11" fill="#d8d8d8"/><rect x="157" y="169" width="11" height="11" fill="#0c1010"/><rect x="169" y="169" width="11" height="11" fill="#fca428"/><rect x="181" y="169" width="11" height="11" fill="#d8d8d4"/><rect x="1" y="181" width="11" height="11" fill="#1a1a1a"/><rect x="13" y="181" width="11" height="11" fill="#68b8dc"/><rect x="25" y="181" width="11" height="11" fill="#f4a420"/><rect x="37" y="181" width="11" height="11" fill="#0c1418"/><rect x="49" y="181" width="11" height="11" fill="#f0d42c"/><rect x="61" y="181" width="11" height="11" fill="#4c88a8"/><rect x="73" y="181" width="11" height="11" fill="#222222"/><rect x="85" y="181" width="11" height="11" fill="#2a2a2a"/><rect x="97" y="181" width="11" height="11" fill="#222222"/><rect x="109" y="181" width="11" height="11" fill="#ffffff"/><rect x="121" y="181" width="11" height="11" fill="#62b4dc"/><rect x="133" y="181" width="11" height="11" fill="#fff"/><rect x="134" y="182" width="3" height="3" fill="#ccc"/><rect x="140" y="182" width="3" height="3" fill="#ccc"/><rect x="137" y="185" width="3" height="3" fill="#ccc"/><rect x="134" y="188" width="3" height="3" fill="#ccc"/><rect x="140" y="188" width="3" height="3" fill="#ccc"/><rect x="145" y="181" width="47" height="11" fill="#808080"/><path d="M114.5 184 L117 186.500 L114.500 189 L112 186.500 Z" fill="none" stroke="#000" stroke-width="0.9" shape-rendering="auto"/><rect x="114" y="186" width="1" height="1" fill="#000"/></svg>
<span class="t" style="left:739.5px;top:557px;font-size:10.5px;letter-spacing:-0.5px;">252</span>
<div class="btn" style="left:766px;top:555.5px;width:27px;height:15.5px;background:#d0d0d0;border-color:#c0c0c0"><svg class="a" style="left:7px;top:2px" width="11" height="10" viewBox="0 0 11 10"><rect x="0.5" y="0.5" width="10" height="9" fill="#ddd" stroke="#8a8a8a"/><rect x="1" y="1" width="3" height="3" fill="#aaa"/><rect x="7" y="1" width="3" height="3" fill="#aaa"/><rect x="4" y="4" width="3" height="3" fill="#aaa"/><rect x="1" y="6.500" width="3" height="2.500" fill="#aaa"/><rect x="7" y="6.500" width="3" height="2.500" fill="#aaa"/></svg></div>
<div class="btn" style="left:794px;top:555.5px;width:27px;height:15.5px;background:#d0d0d0;border-color:#c0c0c0"><svg class="a" style="left:7px;top:1px" width="12" height="12" viewBox="0 0 12 12"><path d="M6 0.800 L11 3 L11 8.600 L6 11.200 L1 8.600 L1 3 Z" fill="#c4c4c4" stroke="#8a8a8a" stroke-width="1"/><path d="M1 3 L6 5.400 L11 3 M6 5.400 L6 11" fill="none" stroke="#8a8a8a" stroke-width="1"/></svg></div>
<div class="btn" style="left:822px;top:555.5px;width:27px;height:15.5px;background:#d0d0d0;border-color:#c0c0c0"><svg class="a" style="left:8px;top:1px" width="10" height="12" viewBox="0 0 10 12"><path d="M2.500 5.500 V3.500 C2.500 0.800 7.500 0.800 7.500 3.500 V5.500" fill="none" stroke="#8a8a8a" stroke-width="1.200"/><rect x="1" y="5.500" width="8" height="5.500" fill="#c8c8c8" stroke="#8a8a8a"/><rect x="4.400" y="7.500" width="1.200" height="2" fill="#8a8a8a"/></svg></div>
<div class="btn" style="left:867px;top:555.5px;width:27px;height:15.5px;background:#e1e1e1;border-color:#adadad"><svg class="a" style="left:8px;top:2px" width="10" height="10" viewBox="0 0 10 10"><path d="M1 1 H9 V9 H4 L1 6 Z" fill="#fff" stroke="#222" stroke-width="1.200"/><path d="M1 6 H4 V9" fill="none" stroke="#222" stroke-width="1.200"/></svg></div>
<div class="btn" style="left:895px;top:555.5px;width:27px;height:15.5px;background:#d0d0d0;border-color:#c0c0c0"><svg class="a" style="left:8px;top:1px" width="10" height="12" viewBox="0 0 10 12"><path d="M0.500 2.500 H9.500 M3.500 2.500 V1 H6.500 V2.500" fill="none" stroke="#9a9a9a" stroke-width="1.200"/><path d="M1.500 4 H8.500 L8 11 H2 Z" fill="#c8c8c8" stroke="#9a9a9a"/><path d="M3.500 5 V10 M5 5 V10 M6.500 5 V10" stroke="#9a9a9a" stroke-width="0.800"/></svg></div>
<div class="grp" style="left:680px;top:587.5px;width:292px;height:59.5px"><span class="lg" style="left:12px">Image Size</span></div>
<span class="t" style="left:687px;top:601px;">W:</span>
<div class="inp" style="left:705px;top:599.5px;width:42px;height:16.5px"><span class="v">800</span></div>
<span class="t" style="left:751px;top:601px;">px</span>
<span class="t" style="left:690px;top:623.5px;">H:</span>
<div class="inp" style="left:705px;top:622px;width:42px;height:16.5px"><span class="v">600</span></div>
<span class="t" style="left:751px;top:623.5px;">px</span>
<svg class="a" style="left:768px;top:608px" width="11" height="26" viewBox="0 0 11 26"><path d="M0 1.500 H9 V24 H0" fill="none" stroke="#111" stroke-width="2"/></svg>
<svg class="a" style="left:782px;top:614px" width="8" height="15" viewBox="0 0 8 15"><rect x="1.200" y="0.800" width="5.600" height="6.500" rx="2.400" fill="#c4c4c4" stroke="#222" stroke-width="1.300"/><rect x="1.200" y="7.700" width="5.600" height="6.500" rx="2.400" fill="#c4c4c4" stroke="#222" stroke-width="1.300"/><rect x="3.300" y="4" width="1.400" height="7" fill="#333"/></svg>
<span class="t" style="left:850.5px;top:601px;">Percent:</span>
<div class="inp" style="left:896.5px;top:599.5px;width:54px;height:16.5px"><span class="v">100</span></div>
<span class="t" style="left:954.5px;top:601px;">%</span>
<span class="t" style="left:795px;top:625px;">Quality:</span>
<div class="dd" style="left:836px;top:621.5px;width:130px;height:20px;border-color:#7a7a7a;"><span class="v">Bicubic</span><span class="b" style="width:18px;background:transparent;border-color:transparent;"><svg width="10" height="6" viewBox="0 0 10 6"><path d="M0.8 0.7 L5 4.8 L9.2 0.7" fill="none" stroke="#3a3a3a" stroke-width="1.25"/></svg></span></div>
<div class="grp" style="left:680px;top:658.5px;width:292px;height:59.5px"><span class="lg" style="left:12px">Animation</span></div>
<span class="t" style="left:686.5px;top:671px;">Looping Options:</span>
<div class="dd" style="left:771px;top:667.5px;width:195px;height:20.5px;border-color:#7a7a7a;"><span class="v">Forever</span><span class="b" style="width:18px;background:transparent;border-color:transparent;"><svg width="10" height="6" viewBox="0 0 10 6"><path d="M0.8 0.7 L5 4.8 L9.2 0.7" fill="none" stroke="#3a3a3a" stroke-width="1.25"/></svg></span></div>
<div class="a" style="left:686px;top:692.5px;width:280px;height:19.5px;background:#f4f4f4;border:1px solid #e8e8e8;border-left-color:#6a6a6a;border-top-color:#a0a0a0"></div>
<span class="t" style="left:730.5px;top:694.8px;font-size:10.5px;letter-spacing:-0.4px;">1 of 72</span>
<div class="a" style="left:804px;top:693.5px;width:161px;height:16.8px;background:#cfe2f3"></div>
<div class="a" style="left:836.2px;top:693.5px;width:1px;height:16.8px;background:#ddeaf6"></div>
<div class="a" style="left:868.4px;top:693.5px;width:1px;height:16.8px;background:#ddeaf6"></div>
<div class="a" style="left:900.6px;top:693.5px;width:1px;height:16.8px;background:#ddeaf6"></div>
<div class="a" style="left:932.8px;top:693.5px;width:1px;height:16.8px;background:#ddeaf6"></div>
<svg class="a" style="left:804px;top:693px" width="161" height="18" viewBox="0 0 161 18">
<path d="M15.500 5 V14.500 L7 9.750 Z M23.500 5 V14.500 L15 9.750 Z" fill="#a4adb6"/>
<path d="M49.500 5 V14.500 L40.600 9.750 Z" fill="#333"/><rect x="50.600" y="5" width="2.300" height="9.500" fill="#333"/>
<path d="M75 4.500 V15.300 L85.700 9.900 Z" fill="#333"/>
<rect x="105.200" y="5" width="2.300" height="9.500" fill="#333"/><path d="M109 5 V14.500 L118.200 9.750 Z" fill="#333"/>
<path d="M135.500 5 V14.500 L144 9.750 Z M144 5 V14.500 L152.700 9.750 Z" fill="#333"/>
</svg>
<div class="a" style="left:162px;top:691px;width:512px;height:26.5px;background:#f4f4f4;border:1px solid #e2e2e2"></div>
<div class="btn" style="left:53px;top:699.8px;width:11px;height:11px;background:#d4d4d4;border-color:#333"></div>
<div class="a" style="left:56px;top:704.800px;width:5px;height:1.2px;background:#111"></div>
<div class="btn" style="left:70px;top:699.8px;width:11px;height:11px;background:#d4d4d4;border-color:#333"></div>
<div class="a" style="left:73px;top:704.800px;width:5px;height:1.2px;background:#111"></div>
<div class="a" style="left:74.900px;top:702.8px;width:1.2px;height:5px;background:#111"></div>
<div class="dd" style="left:85px;top:696.5px;width:74.5px;height:17px;"><span class="v"></span><span class="b" style="width:17px;"><svg width="10" height="6" viewBox="0 0 10 6"><path d="M0.8 0.7 L5 4.8 L9.2 0.7" fill="none" stroke="#3a3a3a" stroke-width="1.25"/></svg></span></div>
<span class="t" style="left:101px;top:698.3px;font-size:10.5px;letter-spacing:-0.4px;">100%</span>
<span class="t" style="left:256.5px;top:698.3px;font-size:10.5px;letter-spacing:-0.36px;">R: --</span>
<span class="t" style="left:300px;top:698.3px;font-size:10.5px;letter-spacing:-0.36px;">G: --</span>
<span class="t" style="left:345.5px;top:698.3px;font-size:10.5px;letter-spacing:-0.36px;">B: --</span>
<span class="t" style="left:438px;top:698.3px;font-size:10.5px;letter-spacing:-0.36px;">Alpha: --</span>
<span class="t" style="left:501.5px;top:698.3px;font-size:10.5px;letter-spacing:-0.36px;">Hex: --</span>
<span class="t" style="left:571.5px;top:698.3px;font-size:10.5px;letter-spacing:-0.36px;">Index: --</span>
<div class="a" style="left:422px;top:696.5px;width:1.3px;height:17px;background:#111"></div>
<div class="btn" style="left:48.5px;top:726.5px;width:78.5px;height:19px"></div>
<span class="t" style="left:60px;top:730px;font-size:12.5px;letter-spacing:-0.4px;">Preview<span style="letter-spacing:0.8px">...</span></span>
<div class="a" style="left:136.5px;top:723.5px;width:52px;height:25px;background:#fff;border:1px solid #c8c8c8"></div>
<div class="btn" style="left:171px;top:724.5px;width:17px;height:22.5px"><svg class="a" style="left:3px;top:9px" width="10" height="6" viewBox="0 0 10 6"><path d="M0.500 0.500 L5 5 L9.500 0.500" fill="none" stroke="#404040" stroke-width="1.100"/></svg></div>
<svg class="a" style="left:142px;top:727px" width="24" height="18" viewBox="0 0 24 18">
<circle cx="7.500" cy="8" r="6.300" fill="#8a8a8a" stroke="#333" stroke-width="1"/>
<path d="M3 5 C5 3 7 5 6 7 C5 9 8 9 7 12 M9 3 C11 5 10 7 12 8" fill="none" stroke="#444" stroke-width="1.300"/>
<circle cx="16.300" cy="9.300" r="5.700" fill="#111"/>
<text x="16.300" y="12.700" font-family="Liberation Sans, sans-serif" font-size="9.500" font-weight="bold" fill="#fff" text-anchor="middle">?</text>
</svg>
<div class="btn" style="left:582.5px;top:726px;width:118.5px;height:20px;border:2px solid #0078d7"></div>
<span class="t" style="left:623.5px;top:729.8px;font-size:12.5px;letter-spacing:-0.4px;">Save<span style="letter-spacing:0.4px">...</span></span>
<div class="a" style="left:577px;top:722px;width:129px;height:27.800px;border:2px solid #dc0000"></div>
<div class="btn" style="left:711px;top:726px;width:118px;height:19.700px"></div>
<span class="t" style="left:752px;top:729.8px;font-size:12.5px;letter-spacing:-0.5px;">Cancel</span>
<div class="btn" style="left:839.500px;top:726px;width:117px;height:19.700px"></div>
<span class="t" style="left:884px;top:729.8px;font-size:12.5px;letter-spacing:-0.5px;">Done</span>
<svg class="a" style="left:0;top:690px;opacity:.62" width="220" height="66" viewBox="0 690 220 66" font-family="Liberation Sans, sans-serif" font-weight="bold" font-size="41" fill="#3a3a3a" stroke="#3a3a3a" stroke-width="1.8" stroke-linejoin="round">
<text transform="translate(4.1 743.5) scale(.8 1)" x="0" y="0">A</text>
<text x="69.3 97.5 123.3 156.6 184.3" y="743.5">PUALS</text>
</svg>
<svg class="a" style="left:28px;top:693px;opacity:.74" width="42" height="53" viewBox="28 693 42 53">
<path d="M39.500 722 L41 714 L57 708.500 L60.400 714 L60.600 722 L59.600 731 L56 737.500 L50 739.500 L45.500 741 L44 744.600 L38.800 744.600 L38.200 733 Z" fill="#fbd398" stroke="#808080" stroke-width="0.700"/>
<path d="M30.300 713 C32 709.500 37 704.500 41.400 701.900 C45 699.500 50 696.500 55.700 695.500 C60 695 63.500 696.500 65.200 698.700 L65.400 701.500 C61 703.500 56 707 52.500 709.800 C49 711.500 45 713 42.200 714.500 C40.500 716.500 39.500 719 38.300 721.700 L35.900 724 L32.700 723.300 L31.100 717.700 Z" fill="#4cba4e" stroke="#708070" stroke-width="0.700"/>
<path d="M33 744.600 L35.500 740 L39.500 739 L39.800 744.600 Z M44 744.600 L45.500 741 L48 744.600 Z" fill="#5cb0dc"/>
<rect x="43" y="713.200" width="9" height="7.800" rx="3.400" fill="#fff" stroke="#8a8a8a" stroke-width="1.100" transform="rotate(-12 47.500 717)"/>
<rect x="55.700" y="710.700" width="9" height="8.400" rx="3.400" fill="#fff" stroke="#8a8a8a" stroke-width="1.100" transform="rotate(-12 60 715)"/>
<ellipse cx="46.500" cy="716.800" rx="2.600" ry="2" fill="#7cc4e2"/><ellipse cx="58.500" cy="714.300" rx="2.400" ry="2.200" fill="#7cc4e2"/>
<path d="M47 728.200 L51.700 727.200 L51.300 730.600 L48.500 731.400 Z" fill="#fff" stroke="#8a8a8a" stroke-width="0.600"/>
</svg>
<span class="t" style="left:907px;top:739.5px;font-size:12.2px;color:#111;letter-spacing:0;">wsxdn.com</span>
<svg class="a" style="left:965px;top:744px" width="11" height="11" viewBox="0 0 11 11"><g fill="#b8b8b8"><rect x="7" y="1" width="2" height="2"/><rect x="4" y="4" width="2" height="2"/><rect x="7" y="4" width="2" height="2"/><rect x="1" y="7" width="2" height="2"/><rect x="4" y="7" width="2" height="2"/><rect x="7" y="7" width="2" height="2"/></g></svg>
<div class="a" style="left:0;top:0;width:980px;height:1px;background:#0e1416"></div>
<div class="a" style="left:0;top:0;width:1.2px;height:758px;background:#0e1416"></div>
<div class="a" style="left:1.2px;top:32px;width:1px;height:726px;background:#07818a"></div>
<div class="a" style="left:977px;top:32px;width:1px;height:726px;background:#07818a"></div>
<div class="a" style="left:978px;top:0;width:2px;height:758px;background:#0e1416"></div>
<div class="a" style="left:0;top:755.6px;width:980px;height:1.4px;background:#07818a"></div>
<div class="a" style="left:0;top:756.6px;width:980px;height:1.4px;background:#0e1416"></div>
</div>
</body></html>
